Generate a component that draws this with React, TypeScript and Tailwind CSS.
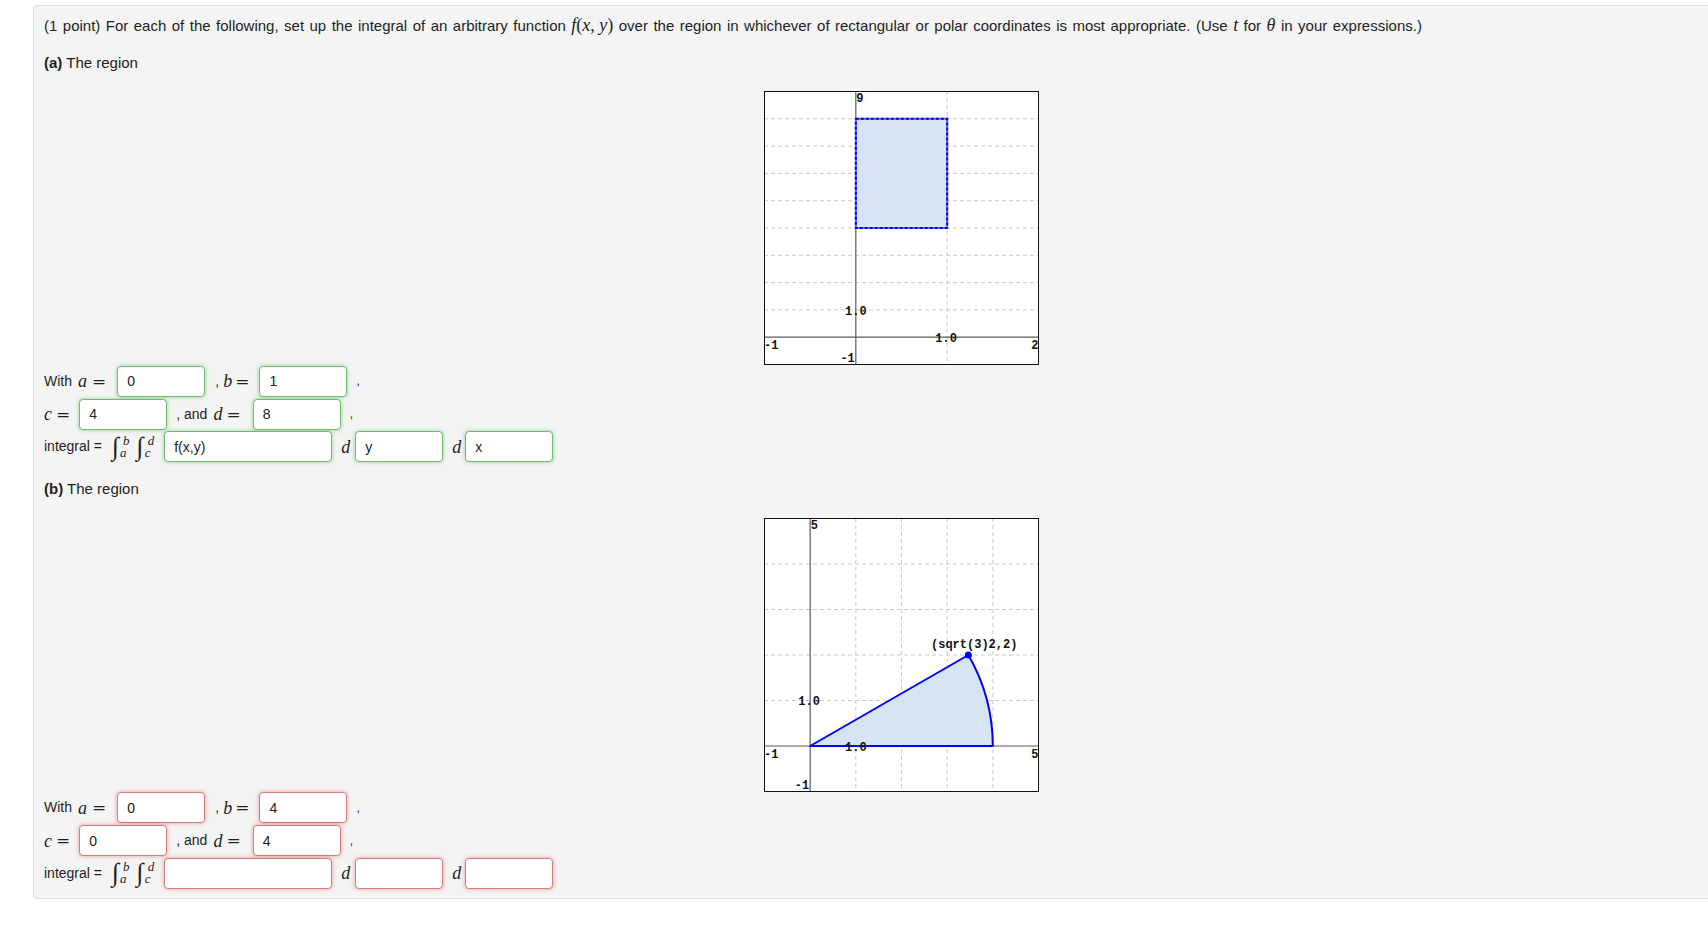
import React from 'react';

type Box = { xmin: number; xmax: number; ymin: number; ymax: number };

const W = 275;
const H = 274;

function mapper(b: Box) {
  const X = (x: number) => 0.5 + ((x - b.xmin) * (W - 1)) / (b.xmax - b.xmin);
  const Y = (y: number) => 0.5 + ((b.ymax - y) * (H - 1)) / (b.ymax - b.ymin);
  return { X, Y };
}

function Frame({ box, children }: { box: Box; children: React.ReactNode }) {
  const { X, Y } = mapper(box);
  const xs: number[] = [];
  const ys: number[] = [];
  for (let i = Math.ceil(box.xmin); i <= box.xmax; i++) if (i !== 0 && i > box.xmin && i < box.xmax) xs.push(i);
  for (let i = Math.ceil(box.ymin); i <= box.ymax; i++) if (i !== 0 && i > box.ymin && i < box.ymax) ys.push(i);
  return (
    <svg width={W} height={H} viewBox={`0 0 ${W} ${H}`} className="block">
      <rect x={0} y={0} width={W} height={H} fill="#fff" />
      {xs.map((x) => (
        <line key={'x' + x} x1={X(x)} x2={X(x)} y1={0} y2={H} stroke="#c9c9c9" strokeDasharray="4 3" />
      ))}
      {ys.map((y) => (
        <line key={'y' + y} x1={0} x2={W} y1={Y(y)} y2={Y(y)} stroke="#c9c9c9" strokeDasharray="4 3" />
      ))}
      <line x1={X(0)} x2={X(0)} y1={0} y2={H} stroke="#5a5a5a" strokeWidth={1.2} />
      <line x1={0} x2={W} y1={Y(0)} y2={Y(0)} stroke="#5a5a5a" strokeWidth={1.2} />
      {children}
      <rect x={0.5} y={0.5} width={W - 1} height={H - 1} fill="none" stroke="#111" strokeWidth={1} />
    </svg>
  );
}

function Lbl({ x, y, anchor = 'start', children }: { x: number; y: number; anchor?: 'start' | 'middle' | 'end'; children: React.ReactNode }) {
  return (
    <text x={x} y={y} textAnchor={anchor} fontFamily="Liberation Mono, monospace" fontWeight="bold" fontSize={12} fill="#111">
      {children}
    </text>
  );
}

function GraphA() {
  const box = { xmin: -1, xmax: 2, ymin: -1, ymax: 9 };
  const { X, Y } = mapper(box);
  const x0 = X(0), x1 = X(1), y8 = Y(8), y4 = Y(4);
  return (
    <Frame box={box}>
      <rect x={x0} y={y8} width={x1 - x0} height={y4 - y8} fill="#d6e4f4" stroke="#6a6aff" strokeWidth={2} />
      <rect x={x0} y={y8} width={x1 - x0} height={y4 - y8} fill="none" stroke="#0000e6" strokeWidth={2} strokeDasharray="3 2" />
      <Lbl x={X(0) + 0.5} y={11}>9</Lbl>
      <Lbl x={X(0)} y={Y(1) + 5} anchor="middle">1.0</Lbl>
      <Lbl x={X(1) - 1} y={Y(0) + 5} anchor="middle">1.0</Lbl>
      <Lbl x={0} y={Y(0) + 12}>-1</Lbl>
      <Lbl x={X(0) - 1} y={H - 3} anchor="end">-1</Lbl>
      <Lbl x={W - 0.5} y={Y(0) + 11.5} anchor="end">2</Lbl>
    </Frame>
  );
}

function GraphB() {
  const box = { xmin: -1, xmax: 5, ymin: -1, ymax: 5 };
  const { X, Y } = mapper(box);
  const r = X(4) - X(0);
  const px = X(2 * Math.sqrt(3));
  const py = Y(2);
  const d = `M ${X(0)} ${Y(0)} L ${X(4)} ${Y(0)} A ${r} ${r} 0 0 0 ${px} ${py} Z`;
  return (
    <Frame box={box}>
      <path d={d} fill="#d6e4f4" stroke="#0000ff" strokeWidth={2} strokeLinejoin="round" />
      <circle cx={px} cy={py} r={3.5} fill="#0000ff" />
      <Lbl x={X(0) + 0.5} y={11}>5</Lbl>
      <Lbl x={X(0) - 1} y={Y(1) + 4.5} anchor="middle">1.0</Lbl>
      <Lbl x={X(1)} y={Y(0) + 4.5} anchor="middle">1.0</Lbl>
      <Lbl x={0} y={Y(0) + 11.5}>-1</Lbl>
      <Lbl x={X(0) - 1} y={H - 3} anchor="end">-1</Lbl>
      <Lbl x={W - 0.5} y={Y(0) + 12} anchor="end">5</Lbl>
      <Lbl x={167} y={129.5}>(sqrt(3)2,2)</Lbl>
    </Frame>
  );
}

function V({ children, className = '' }: { children: React.ReactNode; className?: string }) {
  return <span className={`font-['Liberation_Serif',serif] italic text-[18px] leading-none ${className}`}>{children}</span>;
}

function Eq({ className = '' }: { className?: string }) {
  return <span className={`font-['DejaVu_Serif',serif] text-[17px] leading-none ${className}`}>=</span>;
}

function Field({ value, wide, ok, className = '' }: { value: string; wide?: boolean; ok: boolean; className?: string }) {
  const tone = ok
    ? 'border-[#72b872] shadow-[0_0_4px_rgba(92,184,92,0.6)]'
    : 'border-[#d67c7a] shadow-[0_0_4px_rgba(217,83,79,0.55)]';
  return (
    <input
      readOnly
      value={value}
      className={`h-[31px] ${wide ? 'w-[168px]' : 'w-[88px]'} rounded-[4px] border bg-white px-[9px] text-[14px] text-[#222] outline-none ${tone} ${className}`}
    />
  );
}

function Integral() {
  const sign = "font-['Liberation_Serif',serif] italic text-[26px] leading-none";
  const lim = "font-['Liberation_Serif',serif] italic text-[13px] leading-[12px]";
  return (
    <span className="ml-[10px] inline-flex items-center">
      <span className={sign}>∫</span>
      <span className="ml-[1px] flex flex-col">
        <span className={`${lim} ml-[3px]`}>b</span>
        <span className={lim}>a</span>
      </span>
      <span className={`${sign} ml-[7px]`}>∫</span>
      <span className="ml-[1px] flex flex-col">
        <span className={`${lim} ml-[3px]`}>d</span>
        <span className={lim}>c</span>
      </span>
    </span>
  );
}

function Rows({ ok, v }: { ok: boolean; v: string[] }) {
  return (
    <div>
      <div className="flex h-[32.7px] items-center">
        <span>With</span>
        <V className="ml-[6px]">a</V>
        <Eq className="ml-[5px]" />
        <Field ok={ok} value={v[0]} className="ml-[11px]" />
        <span className="ml-[10px]">,</span>
        <V className="ml-[4px]">b</V>
        <Eq className="ml-[3px]" />
        <Field ok={ok} value={v[1]} className="ml-[10px]" />
        <span className="ml-[9px] text-[12px]">,</span>
      </div>
      <div className="flex h-[32.7px] items-center">
        <V>c</V>
        <Eq className="ml-[4px]" />
        <Field ok={ok} value={v[2]} className="ml-[9px]" />
        <span className="ml-[9px]">, and</span>
        <V className="ml-[6px]">d</V>
        <Eq className="ml-[4px]" />
        <Field ok={ok} value={v[3]} className="ml-[12px]" />
        <span className="ml-[9px] text-[12px]">,</span>
      </div>
      <div className="flex h-[32.7px] items-center">
        <span>integral =</span>
        <Integral />
        <Field ok={ok} wide value={v[4]} className="ml-[10px]" />
        <V className="ml-[9px]">d</V>
        <Field ok={ok} value={v[5]} className="ml-[5px]" />
        <V className="ml-[9px]">d</V>
        <Field ok={ok} value={v[6]} className="ml-[4px]" />
      </div>
    </div>
  );
}

export default function App() {
  return (
    <div className="min-h-screen bg-white pl-[33px] pt-[5px] font-['Liberation_Sans',Arial,sans-serif] text-[14px] text-[#1e1e1e]">
      <div className="h-[894px] rounded-l-[4px] border border-r-0 border-[#e0e0e0] bg-[#f4f4f4] pl-[10px] pt-[10px]">
        <p className="text-[15px] leading-[20px] [word-spacing:1.3px]">
          (1 point) For each of the following, set up the integral of an arbitrary function{' '}
          <span className="font-['Liberation_Serif',serif] text-[18px] leading-none [word-spacing:0px]">
            <i>f</i>(<i>x</i>, <i>y</i>)
          </span>{' '}
          over the region in whichever of rectangular or polar coordinates is most appropriate. (Use <V>t</V> for <V>θ</V> in your
          expressions.)
        </p>
        <p className="mt-[17px] text-[15px] leading-[20px]">
          <b>(a)</b> The region
        </p>
        <div className="mt-[18px] pl-[720px]">
          <GraphA />
        </div>
        <Rows ok v={['0', '1', '4', '8', 'f(x,y)', 'y', 'x']} />
        <p className="mt-[16px] text-[15px] leading-[20px]">
          <b>(b)</b> The region
        </p>
        <div className="mt-[18.5px] pl-[720px]">
          <GraphB />
        </div>
        <Rows ok={false} v={['0', '4', '0', '4', '', '', '']} />
      </div>
    </div>
  );
}
